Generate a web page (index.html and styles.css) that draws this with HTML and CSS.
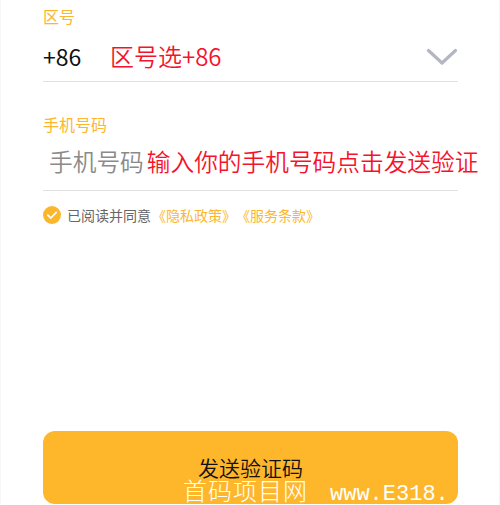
FILE: index.html
```html
<!DOCTYPE html>
<html lang="zh-CN">
<head>
<meta charset="utf-8">
<title>登录</title>
<link rel="stylesheet" href="styles.css">
</head>
<body>
<div class="page">
  <div class="label label-first">区号</div>
  <div class="field field-code">
    <span class="code">+86</span>
    <span class="note note-code">区号选+86</span>
    <svg class="chevron" width="32" height="20" viewBox="0 0 32 20" aria-hidden="true">
      <path d="M2.5 3.5 L16 16 L29.5 3.5" fill="none" stroke="#b4b7c2" stroke-width="3.2" stroke-linecap="round" stroke-linejoin="round"/>
    </svg>
  </div>

  <div class="label label-second">手机号码</div>
  <div class="field field-phone">
    <span class="placeholder">手机号码</span>
    <span class="note note-phone">输入你的手机号码点击发送验证</span>
  </div>

  <div class="agree">
    <span class="check">
      <svg width="18" height="18" viewBox="0 0 18 18" aria-hidden="true">
        <circle cx="9" cy="9" r="9" fill="#fcb62c"/>
        <path d="M4.8 9.2 L7.8 12 L13.2 6.4" fill="none" stroke="#fff" stroke-width="1.8" stroke-linecap="round" stroke-linejoin="round"/>
      </svg>
    </span>
    <span class="agree-text">已阅读并同意</span><span class="agree-link">《隐私政策》《服务条款》</span>
  </div>

  <div class="btn-wrap">
    <div class="btn">发送验证码</div>
    <div class="watermark"><span class="wm-cn">首码项目网</span><span class="wm-en">www.E318.</span></div>
  </div>
</div>
</body>
</html>
```

FILE: styles.css
```css
* { box-sizing: border-box; }
html, body { margin: 0; padding: 0; background: #fff; }
body {
  font-family: "Noto Sans CJK SC", "Noto Sans", sans-serif;
  width: 500px;
  height: 505px;
  overflow: hidden;
  text-spacing-trim: space-all;
}
.page {
  width: 500px;
  height: 505px;
  padding: 0 41px 0 42px;
  border-left: 1px solid #f7f7f7;
  border-right: 1px solid #f7f7f7;
}
.label {
  font-size: 16px;
  line-height: 19px;
  color: #fcb62e;
}
.label-first { padding-top: 7px; }
.label-second { margin-top: 33px; }

.field {
  display: flex;
  align-items: center;
  border-bottom: 1px solid #e2e2e2;
  font-size: 24px;
  font-weight: 350;
  white-space: nowrap;
}
.field-code {
  height: 56px;
  padding-top: 4px;
}
.code { color: #111; width: 67px; font-weight: 400; font-size: 23px; }
.note { color: #f5132b; }
.chevron { margin-left: auto; margin-right: 0; margin-top: 2px; }

.field-phone {
  height: 57px;
  padding-bottom: 3px;
  font-size: 23.7px;
}
.placeholder { color: #8a8a8a; padding-left: 6px; margin-right: 3px; }

.agree {
  display: flex;
  align-items: center;
  margin-top: 14px;
  height: 20px;
  font-size: 14px;
  white-space: nowrap;
}
.check { display: flex; width: 18px; height: 18px; margin-right: 6px; }
.agree-text { color: #666; }
.agree-link { color: #fcb62e; margin-left: 1px; }

.btn-wrap {
  position: relative;
  margin-top: 206px;
}
.btn {
  height: 73px;
  border-radius: 12px;
  background: #feb72b;
  color: #111;
  font-size: 21px;
  font-weight: 350;
  display: flex;
  align-items: center;
  justify-content: center;
  padding-bottom: 2px;
}
.watermark {
  position: absolute;
  left: 140px;
  top: 44px;
  color: #fff;
  white-space: nowrap;
  line-height: 30px;
}
.wm-cn {
  font-family: "Noto Sans CJK SC", sans-serif;
  font-weight: 300;
  font-size: 24px;
  letter-spacing: 1px;
}
.wm-en {
  font-family: "Liberation Mono", monospace;
  font-size: 22px;
  margin-left: 22px;
}
```
